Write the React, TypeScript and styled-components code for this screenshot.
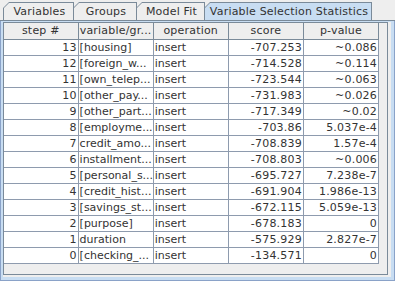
import React from "react";
import styled, { createGlobalStyle } from "styled-components";

const Global = createGlobalStyle`
  html, body { margin: 0; padding: 0; background: #eeeeee; }
  body { font-family: "DejaVu Sans", "Liberation Sans", sans-serif; font-size: 11px; color: #333333; }
`;

const Frame = styled.div`
  width: 395px;
  height: 281px;
  display: flex;
  flex-direction: column;
  box-sizing: border-box;
  overflow: hidden;
`;

const TabRow = styled.div`
  display: flex;
  align-items: flex-end;
  height: 20px;
  padding-left: 3px;
  box-sizing: border-box;
`;

const Tab = styled.div<{ $selected?: boolean; $w: number }>`
  position: relative;
  width: ${(p) => p.$w}px;
  height: 18px;
  margin-right: -1px;
  background: #7a8a99;
  clip-path: polygon(0 6px, 6px 0, 100% 0, 100% 100%, 0 100%);
  display: flex;
  align-items: center;
  justify-content: center;
  z-index: ${(p) => (p.$selected ? 2 : 1)};
  &::before {
    content: "";
    position: absolute;
    left: 1px;
    top: 1px;
    right: 1px;
    bottom: 0;
    background: ${(p) => (p.$selected ? "#c8ddf2" : "#eeeeee")};
    clip-path: polygon(0 5px, 5px 0, 100% 0, 100% 100%, 0 100%);
  }
  span {
    position: relative;
    padding-top: 1px;
    padding-left: 2px;
    color: #333333;
    white-space: nowrap;
    font-size: 11px;
    letter-spacing: 0.2px;
  }
`;

const Content = styled.div`
  flex: 1;
  display: flex;
  border-top: 1px solid #7a8a99;
  background: #c8ddf2;
  padding: 1px 4px 4px 3px;
  box-shadow: inset 1px 0 0 #8aa2c8, inset -1px 0 0 #8aa2c8, inset 0 -1px 0 #8aa2c8;
  box-sizing: border-box;
  min-height: 0;
`;

const Inner = styled.div`
  flex: 1;
  display: flex;
  background: #eeeeee;
  padding: 0 3px 2px 0;
  box-sizing: border-box;
  min-height: 0;
`;

const ScrollPane = styled.div`
  flex: 1;
  border: 1px solid #7a8a99;
  background: #eeeeee;
  box-sizing: border-box;
  overflow: hidden;
  display: flex;
  align-items: flex-start;
`;

const Table = styled.table`
  border-collapse: collapse;
  table-layout: fixed;
  width: 375px;
  background: #ffffff;
  font-size: 11px;
`;

const Th = styled.th`
  height: 16px;
  padding: 0;
  font-weight: normal;
  background: #eeeeee;
  border: 1px solid #7a8a99;
  border-top: none;
  text-align: center;
  line-height: 14px;
  white-space: nowrap;
  overflow: hidden;
  color: #333333;
  letter-spacing: 0.2px;
  &:first-child { border-left: none; }
`;

const Td = styled.td<{ $right?: boolean }>`
  height: 15px;
  padding: 0 1px 0 1px;
  border: 1px solid #8e9bae;
  border-top: none;
  text-align: ${(p) => (p.$right ? "right" : "left")};
  line-height: 15px;
  white-space: nowrap;
  overflow: hidden;
  color: #333333;
  letter-spacing: ${(p) => (p.$right ? "0.2px" : "0")};
  &:first-child { border-left: none; }
`;

const rows: [string, string, string, string, string][] = [
  ["13", "[housing]", "insert", "-707.253", "~0.086"],
  ["12", "[foreign_w...", "insert", "-714.528", "~0.114"],
  ["11", "[own_telep...", "insert", "-723.544", "~0.063"],
  ["10", "[other_pay...", "insert", "-731.983", "~0.026"],
  ["9", "[other_part...", "insert", "-717.349", "~0.02"],
  ["8", "[employme...", "insert", "-703.86", "5.037e-4"],
  ["7", "credit_amo...", "insert", "-708.839", "1.57e-4"],
  ["6", "installment...", "insert", "-708.803", "~0.006"],
  ["5", "[personal_s...", "insert", "-695.727", "7.238e-7"],
  ["4", "[credit_hist...", "insert", "-691.904", "1.986e-13"],
  ["3", "[savings_st...", "insert", "-672.115", "5.059e-13"],
  ["2", "[purpose]", "insert", "-678.183", "0"],
  ["1", "duration", "insert", "-575.929", "2.827e-7"],
  ["0", "[checking_...", "insert", "-134.571", "0"],
];

const tabs = [
  { label: "Variables", w: 71 },
  { label: "Groups", w: 64 },
  { label: "Model Fit", w: 69 },
  { label: "Variable Selection Statistics", w: 168, selected: true },
];

export default function App() {
  return (
    <Frame>
      <Global />
      <TabRow>
        {tabs.map((t) => (
          <Tab key={t.label} $w={t.w} $selected={t.selected}>
            <span>{t.label}</span>
          </Tab>
        ))}
      </TabRow>
      <Content>
        <Inner>
          <ScrollPane>
            <Table>
              <colgroup>
                <col style={{ width: 74 }} />
                <col style={{ width: 75 }} />
                <col style={{ width: 75 }} />
                <col style={{ width: 75 }} />
                <col style={{ width: 75 }} />
              </colgroup>
              <thead>
                <tr>
                  <Th>step #</Th>
                  <Th>variable/gr...</Th>
                  <Th>operation</Th>
                  <Th>score</Th>
                  <Th>p-value</Th>
                </tr>
              </thead>
              <tbody>
                {rows.map((r) => (
                  <tr key={r[0]}>
                    <Td $right>{r[0]}</Td>
                    <Td>{r[1]}</Td>
                    <Td>{r[2]}</Td>
                    <Td $right>{r[3]}</Td>
                    <Td $right>{r[4]}</Td>
                  </tr>
                ))}
              </tbody>
            </Table>
          </ScrollPane>
        </Inner>
      </Content>
    </Frame>
  );
}
